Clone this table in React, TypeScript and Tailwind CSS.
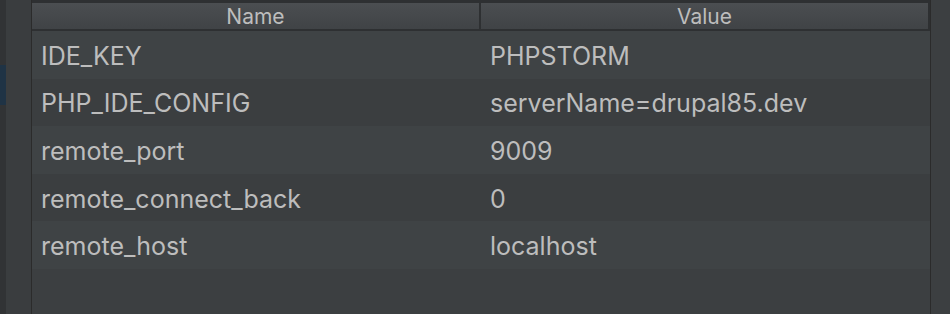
import React from 'react';

const rows = [
  { name: 'IDE_KEY', value: 'PHPSTORM' },
  { name: 'PHP_IDE_CONFIG', value: 'serverName=drupal85.dev' },
  { name: 'remote_port', value: '9009' },
  { name: 'remote_connect_back', value: '0' },
  { name: 'remote_host', value: 'localhost' },
];

export default function App() {
  return (
    <div
      className="w-[950px] h-[314px] flex bg-[#3c3f41] overflow-hidden text-[#bdbdbd]"
      style={{ fontFamily: 'Inter, "Liberation Sans", sans-serif' }}
    >
      {/* left gutter */}
      <div className="w-[31px] flex shrink-0">
        <div className="w-[6px] bg-[#313335] flex flex-col">
          <div className="h-[65px]" />
          <div className="h-[40px] bg-[#1f3345]" />
        </div>
        <div className="flex-1 bg-[#3a3d3f]" />
      </div>

      {/* table */}
      <div className="w-[900px] shrink-0 flex flex-col border-l border-r border-[#2b2b2b] bg-[#3c3f41]">
        {/* header */}
        <div className="h-[31px] flex border-t-[3px] border-b-2 border-[#2e3032] bg-gradient-to-b from-[#4b4e51] to-[#404346] text-[21px] leading-none">
          <div className="w-[449px] flex items-center justify-center border-r-2 border-[#2e3032]">Name</div>
          <div className="flex-1 flex items-center justify-center border-r-2 border-[#2e3032]">Value</div>
        </div>

        {/* rows */}
        {rows.map((row, i) => (
          <div
            key={row.name}
            className={`h-[47.6px] flex items-center pt-[3px] text-[25px] leading-none ${
              i % 2 === 0 ? 'bg-[#3f4345]' : 'bg-[#3b3e40]'
            }`}
          >
            <div className="w-[449px] pl-[9px]">{row.name}</div>
            <div className="flex-1 pl-[9px]">{row.value}</div>
          </div>
        ))}
        <div className="flex-1 bg-[#3c3f41]" />
      </div>

      <div className="flex-1 bg-[#3c3f41]" />
    </div>
  );
}
